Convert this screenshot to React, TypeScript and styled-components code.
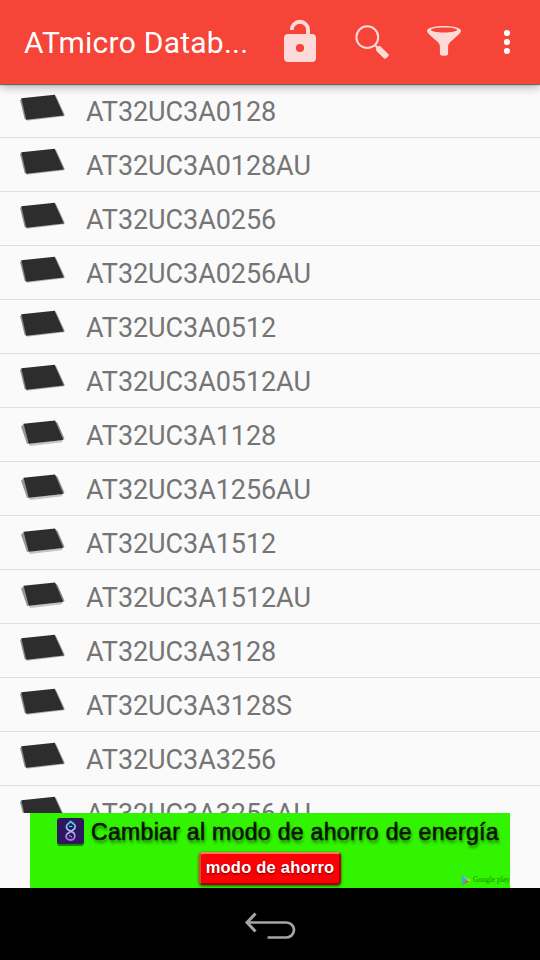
import React from "react";
import styled, { createGlobalStyle } from "styled-components";

const GlobalStyle = createGlobalStyle`
  * { box-sizing: border-box; }
  body { margin: 0; background: #fafafa; overflow: hidden; }
`;

const Screen = styled.main`
  width: 540px;
  height: 960px;
  display: flex;
  flex-direction: column;
  background: #fafafa;
  font-family: Roboto, "Liberation Sans", sans-serif;
`;

const Toolbar = styled.header`
  flex: none;
  height: 84px;
  display: flex;
  align-items: center;
  padding-left: 24px;
  background: #f64438;
  z-index: 1;
  box-shadow: 0 1px 1px rgba(0, 0, 0, 0.48), 0 3px 9px rgba(0, 0, 0, 0.3);
`;

const Title = styled.h1`
  width: 240px;
  margin: 0;
  padding-top: 2px;
  color: #fff;
  font-size: 30px;
  font-weight: 400;
  line-height: 40px;
  letter-spacing: 0.25px;
  white-space: nowrap;
`;

const Action = styled.button<{ $width?: number; $height?: number }>`
  width: ${(p) => p.$width ?? 72}px;
  height: ${(p) => p.$height ?? 84}px;
  flex: none;
  padding: 0;
  border: 0;
  background: none;
  svg { display: block; }
`;

const List = styled.ul`
  flex: none;
  height: 729px;
  margin: 0;
  padding: 0;
  overflow: hidden;
  list-style: none;
`;

const Row = styled.li`
  display: flex;
  height: 54px;
  padding-left: 16px;
  border-bottom: 1px solid #dedede;
`;

const ChipArt = styled.svg`
  flex: none;
  width: 70px;
  height: 53px;
`;

const Label = styled.span`
  color: #757575;
  font-size: 27px;
  line-height: 57px;
  letter-spacing: -0.07px;
  white-space: nowrap;
`;

const Banner = styled.aside`
  flex: none;
  width: 480px;
  height: 75px;
  margin: 0 30px;
  padding: 4px 0 0 26px;
  background: #32f400;
  font-family: "Liberation Sans", Arial, sans-serif;
`;

const BannerHeading = styled.div`
  display: flex;
  align-items: center;
  height: 29px;
  gap: 6px;
`;

const BannerText = styled.span`
  color: #061500;
  font-size: 23px;
  line-height: 28px;
  letter-spacing: 0.32px;
  white-space: nowrap;
  -webkit-text-stroke: 0.6px #061500;
  text-shadow: 1px 3px 3px rgba(0, 60, 0, 0.6);
`;

const BannerFooter = styled.div`
  display: flex;
  align-items: flex-start;
  padding: 6px 0 0 143px;
`;

const BannerButton = styled.button`
  flex: none;
  width: 142px;
  height: 33px;
  padding: 0 0 2px;
  border: 2px solid;
  border-color: #ff7560 #b00000 #a80000 #e84430;
  border-radius: 4px;
  background: #fb0004;
  color: #fff;
  font: bold 16.5px/27px "Liberation Sans", Arial, sans-serif;
  letter-spacing: 0.22px;
  white-space: nowrap;
  text-shadow: 0 1px 2px #760000;
  box-shadow: 0 1px 3px rgba(0, 50, 0, 0.8);
`;

const PlayCredit = styled.div`
  flex: none;
  display: flex;
  align-items: center;
  gap: 1px;
  margin: 22px 0 0 120px;
  height: 12px;
  color: #159000;
  font: 7.5px/12px "Liberation Serif", serif;
  white-space: nowrap;
`;

const NavBar = styled.nav`
  flex: none;
  height: 72px;
  display: flex;
  justify-content: center;
  background: #000;
`;

const parts: [string, boolean][] = [
  ["AT32UC3A0128", false],
  ["AT32UC3A0128AU", false],
  ["AT32UC3A0256", false],
  ["AT32UC3A0256AU", false],
  ["AT32UC3A0512", false],
  ["AT32UC3A0512AU", false],
  ["AT32UC3A1128", true],
  ["AT32UC3A1256AU", true],
  ["AT32UC3A1512", true],
  ["AT32UC3A1512AU", true],
  ["AT32UC3A3128", false],
  ["AT32UC3A3128S", false],
  ["AT32UC3A3256", false],
  ["AT32UC3A3256AU", false],
];

function Chip({ leaded }: { leaded: boolean }) {
  return (
    <ChipArt viewBox="16 0 70 53">
      {leaded ? (
        <>
          <path d="M21 18.5L24 16L29.5 35.5L27 36Z" fill="#969696" />
          <path d="M28.5 35.5L62.5 32L62 34.2L30 38Z" fill="#c4c4c4" />
          <path d="M55 13L57.5 15L64.5 31L62 32Z" fill="#828282" />
          <path d="M23.5 15.8L55 12.5L63.2 32L28.8 35.8Z" fill="#2d2d2d" />
        </>
      ) : (
        <>
          <path d="M20 16L22 14.5L26.5 35L24.8 35.5Z" fill="#8b918b" />
          <path d="M26 35L64 31L64.3 32.3L27 36.7Z" fill="#b5b5b5" />
          <path d="M55 11L56 12L64.8 31L63 32Z" fill="#999" />
          <path d="M21.3 14.3L54.7 10.8L63.8 31.5L26.2 35.7Z" fill="#2d2d2d" />
        </>
      )}
    </ChipArt>
  );
}

export default function App() {
  return (
    <>
      <GlobalStyle />
      <Screen>
        <Toolbar>
          <Title>ATmicro Datab...</Title>
          <Action aria-label="Unlock">
            <svg width="72" height="84" viewBox="264 0 72 84">
              <path d="M291.8 30V29.5A8.1 7.7 0 0 1 308 29.5V36" fill="none" stroke="#fddad7" strokeWidth="3.9" />
              <path fillRule="evenodd" fill="#fddad7" d="M288 34H312A4 4 0 0 1 316 38V58A4 4 0 0 1 312 62H288A4 4 0 0 1 284 58V38A4 4 0 0 1 288 34ZM304.1 48A4.1 4.1 0 1 0 295.9 48A4.1 4.1 0 1 0 304.1 48Z" />
            </svg>
          </Action>
          <Action aria-label="Search">
            <svg width="72" height="84" viewBox="336 0 72 84" fill="none" stroke="#fddad7">
              <circle cx="367.3" cy="37.2" r="10.9" strokeWidth="2" />
              <path d="M374.8 45L378.5 48.7" strokeWidth="2" />
              <path d="M376.6 48.3Q377 46.3 380 46.5L388.5 54.8Q387.5 57.7 384.6 58.4L376.8 51Z" fill="#fddad7" strokeWidth="1" strokeLinejoin="round" />
            </svg>
          </Action>
          <Action aria-label="Filter">
            <svg width="72" height="84" viewBox="408 0 72 84">
              <path fillRule="evenodd" fill="#fddad7" d="M427 30.8C427 27.8 435 26.1 444 26.1S461 27.8 461 30.8C461 33.3 456 36.7 452.7 39.9Q448.1 43.2 448.1 46V53.8Q448.1 55.8 444 55.8T439.9 53.8V46Q439.9 43.2 435.3 39.9C432 36.7 427 33.3 427 30.8ZM430.8 29.8C430.8 31.3 436.8 32.5 444 32.5S457.2 31.3 457.2 29.8S451.2 27.4 444 27.4S430.8 28.3 430.8 29.8Z" />
            </svg>
          </Action>
          <Action aria-label="More options" $width={60}>
            <svg width="60" height="84" viewBox="480 0 60 84" fill="#fff">
              <circle cx="507" cy="33" r="3.1" />
              <circle cx="507" cy="42" r="3.1" />
              <circle cx="507" cy="51" r="3.1" />
            </svg>
          </Action>
        </Toolbar>
        <List>
          {parts.map(([name, leaded]) => (
            <Row key={name}>
              <Chip leaded={leaded} />
              <Label>{name}</Label>
            </Row>
          ))}
        </List>
        <Banner>
          <BannerHeading>
            <svg width="29" height="29" viewBox="0 0 29 29">
              <defs>
                <linearGradient id="emblem" x1="0" y1="0" x2="0" y2="1">
                  <stop offset="0" stopColor="#35c8ed" />
                  <stop offset=".5" stopColor="#a2c1ef" />
                  <stop offset="1" stopColor="#b367df" />
                </linearGradient>
              </defs>
              <rect x="1" y="2" width="27" height="27" rx="3" fill="#168600" />
              <rect x="1" y="1" width="27" height="26" rx="3" fill="#2d185d" />
              <path d="M14.7 4.5L10.8 8.2C9.8 11 11 12.5 13.5 13.5L17.8 16C20.2 19 18.5 23 14.5 23C10.5 23 8.9 19.5 11 17L17 13C20.2 10.8 19.5 8 17.8 7Z" fill="none" stroke="url(#emblem)" strokeWidth="1.8" strokeLinejoin="round" />
              <path d="M13 9.5H16.3M13 18.5L16 20" stroke="#9dbbe7" />
            </svg>
            <BannerText>Cambiar al modo de ahorro de energía</BannerText>
          </BannerHeading>
          <BannerFooter>
            <BannerButton>modo de ahorro</BannerButton>
            <PlayCredit>
              <svg width="11" height="12" viewBox="0 0 11 12">
                <path d="M1 1V11L6 6Z" fill="#40a9d5" />
                <path d="M1 1L7.5 4.5L6 6Z" fill="#72cdb0" />
                <path d="M1 11L7.5 7.5L6 6Z" fill="#df4544" />
                <path d="M7.5 4.5L10 6L7.5 7.5L6 6Z" fill="#dfc637" />
              </svg>
              Google play
            </PlayCredit>
          </BannerFooter>
        </Banner>
        <NavBar>
          <Action aria-label="Back" $width={100} $height={72}>
            <svg width="100" height="72" viewBox="220 888 100 72" fill="none" stroke="#a5a5a5" strokeWidth="2.7">
              <path d="M247 922.5H286.5A7.5 7.5 0 0 1 286.5 937.5H267.5" />
              <path d="M255.5 913.5L247 922.5L255.5 931.5" strokeWidth="3" />
            </svg>
          </Action>
        </NavBar>
      </Screen>
    </>
  );
}
